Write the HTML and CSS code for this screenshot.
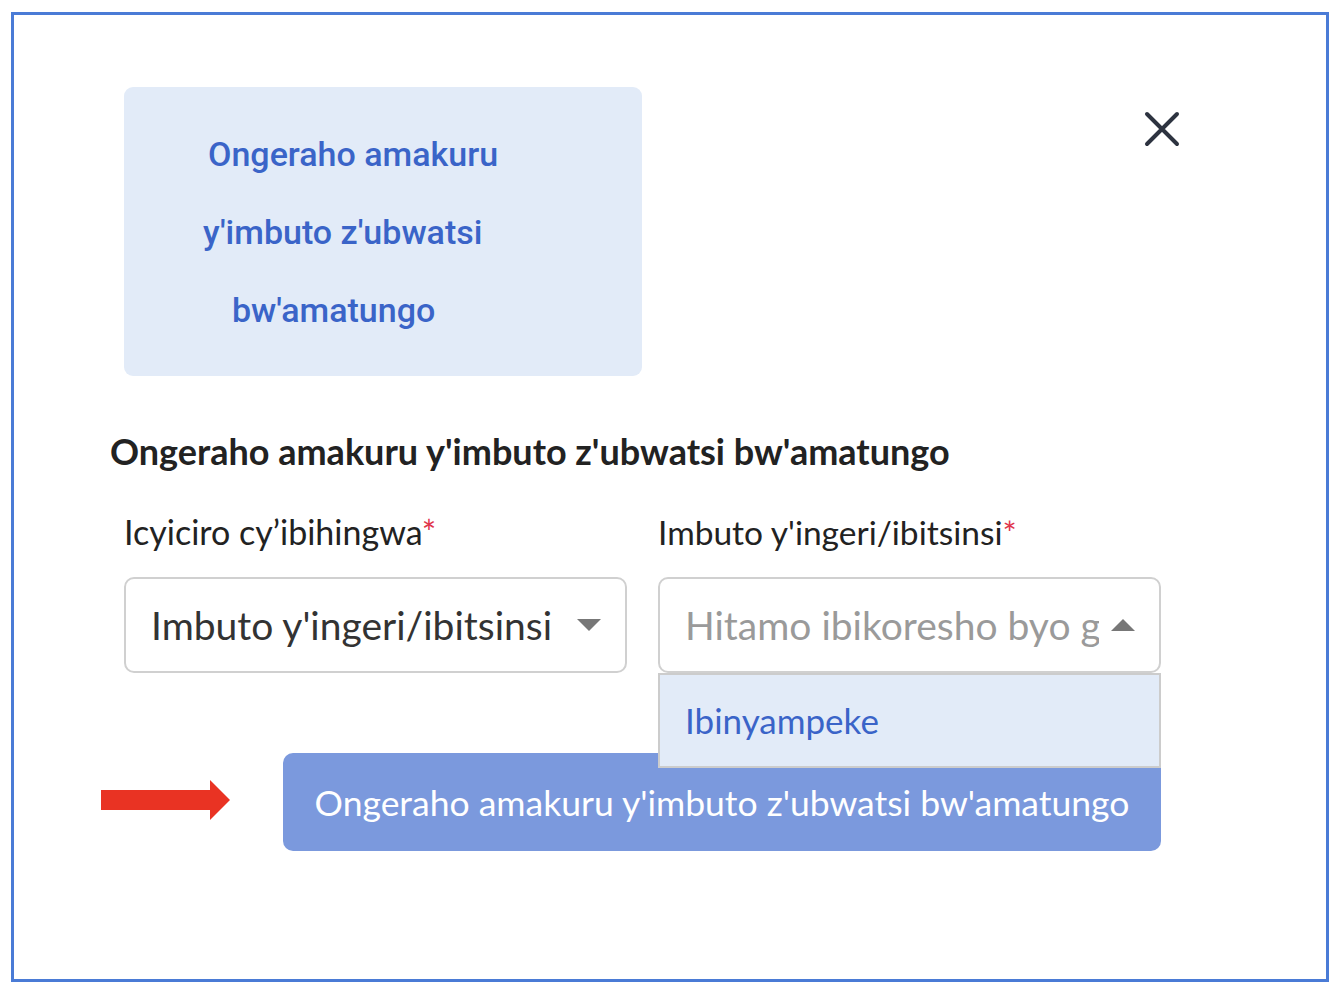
FILE: index.html
```html
<!DOCTYPE html>
<html>
	<head>
		<meta charset="utf-8">
		<title>Ongeraho amakuru</title>
		<link rel="stylesheet" href="styles.css">
	</head>
	<body>
		<div class="frame">
			<!-- title card and close -->
			<div class="top">
				<div class="card">
					<p class="l1">Ongeraho amakuru</p>
					<p class="l2">y'imbuto z'ubwatsi</p>
					<p class="l3">bw'amatungo</p>
				</div>
				<svg class="close" width="36" height="36" viewBox="0 0 36 36">
					<path d="M3 3L33 33M33 3L3 33" stroke="#2d3340" stroke-width="4" stroke-linecap="round" fill="none"/>
				</svg>
			</div>

			<h2 class="heading">Ongeraho amakuru y'imbuto z'ubwatsi bw'amatungo</h2>

			<!-- form fields -->
			<div class="fields">
				<div class="field">
					<label>Icyiciro cy’ibihingwa<span class="req">*</span></label>
					<div class="select">
						<span class="value">Imbuto y'ingeri/ibitsinsi</span>
						<span class="caret down"></span>
					</div>
				</div>
				<div class="field">
					<label>Imbuto y'ingeri/ibitsinsi<span class="req">*</span></label>
					<div class="select open">
						<span class="value ph">Hitamo ibikoresho byo gukoresha</span>
						<span class="caret up"></span>
						<div class="menu">
							<div class="option">Ibinyampeke</div>
						</div>
					</div>
				</div>
			</div>

			<div class="actions">
				<svg class="arrow" width="129" height="40" viewBox="0 0 129 40">
					<path d="M0 10H109V0L129 20L109 40V30H0Z" fill="#e93323"/>
				</svg>
				<button class="btn">Ongeraho amakuru y'imbuto z'ubwatsi bw'amatungo</button>
			</div>
		</div>
	</body>
</html>
```

FILE: styles.css
```css
* {
	margin: 0;
	padding: 0;
	box-sizing: border-box;
}
body {
	background: #fff;
	font-family: Lato, "Liberation Sans", sans-serif;
	color: #222;
}
.frame {
	margin: 12px 0 0 11px;
	width: 1318px;
	height: 970px;
	border: 3px solid #4a7bd6;
	padding: 72px 0 0 96px;
}
.top {
	display: flex;
	justify-content: space-between;
	align-items: flex-start;
	margin-left: 14px;
	width: 1056px;
}
.card {
	width: 518px;
	height: 289px;
	background: #e2ebf8;
	border-radius: 9px;
	font-family: Roboto, "Liberation Sans", sans-serif;
	font-weight: 500;
	font-size: 34px;
	color: #3a64c8;
	padding-top: 28px;
}
.card p {
	line-height: 78px;
	height: 78px;
}
.l1 { padding-left: 84px; }
.l2 { padding-left: 79px; }
.l3 { padding-left: 108px; }
.close {
	margin-top: 24px;
	display: block;
}
.heading {
	font-size: 36px;
	font-weight: 700;
	line-height: 40px;
	margin-top: 55px;
	color: #222;
}
.fields {
	display: grid;
	grid-template-columns: 503px 503px;
	column-gap: 31px;
	margin-left: 14px;
	margin-top: 41px;
}
.field label {
	display: block;
	font-size: 34px;
	line-height: 40px;
	color: #222;
}
.field + .field label {
	font-size: 33.5px;
}
.req {
	color: #e0344b;
}
.select {
	position: relative;
	margin-top: 25px;
	height: 96px;
	border: 2px solid #d0d0d0;
	border-radius: 10px;
	display: flex;
	align-items: center;
	padding: 0 24px 0 25px;
	background: #fff;
}
.select .value {
	flex: 1;
	font-size: 39px;
	color: #333;
	white-space: nowrap;
	overflow: hidden;
}
.select .ph {
	color: #9a9a9a;
}
.caret {
	width: 0;
	height: 0;
	border-left: 12px solid transparent;
	border-right: 12px solid transparent;
	margin-left: 12px;
}
.caret.down {
	border-top: 12px solid #777;
}
.caret.up {
	border-bottom: 12px solid #777;
}
.menu {
	position: absolute;
	left: -2px;
	right: -2px;
	top: calc(100% + 2px);
	height: 95px;
	background: #e2ebf8;
	border: 2px solid #ccc;
	z-index: 2;
}
.option {
	font-size: 35px;
	color: #3a64c8;
	line-height: 91px;
	padding-left: 25px;
}
.actions {
	display: flex;
	align-items: center;
	margin-left: -9px;
	margin-top: 80px;
}
.arrow {
	display: block;
	margin-top: -4px;
}
.btn {
	margin-left: 53px;
	width: 878px;
	height: 98px;
	border: none;
	border-radius: 10px;
	background: #7b99dd;
	color: #fff;
	font-family: Lato, "Liberation Sans", sans-serif;
	font-size: 35.5px;
}
```
